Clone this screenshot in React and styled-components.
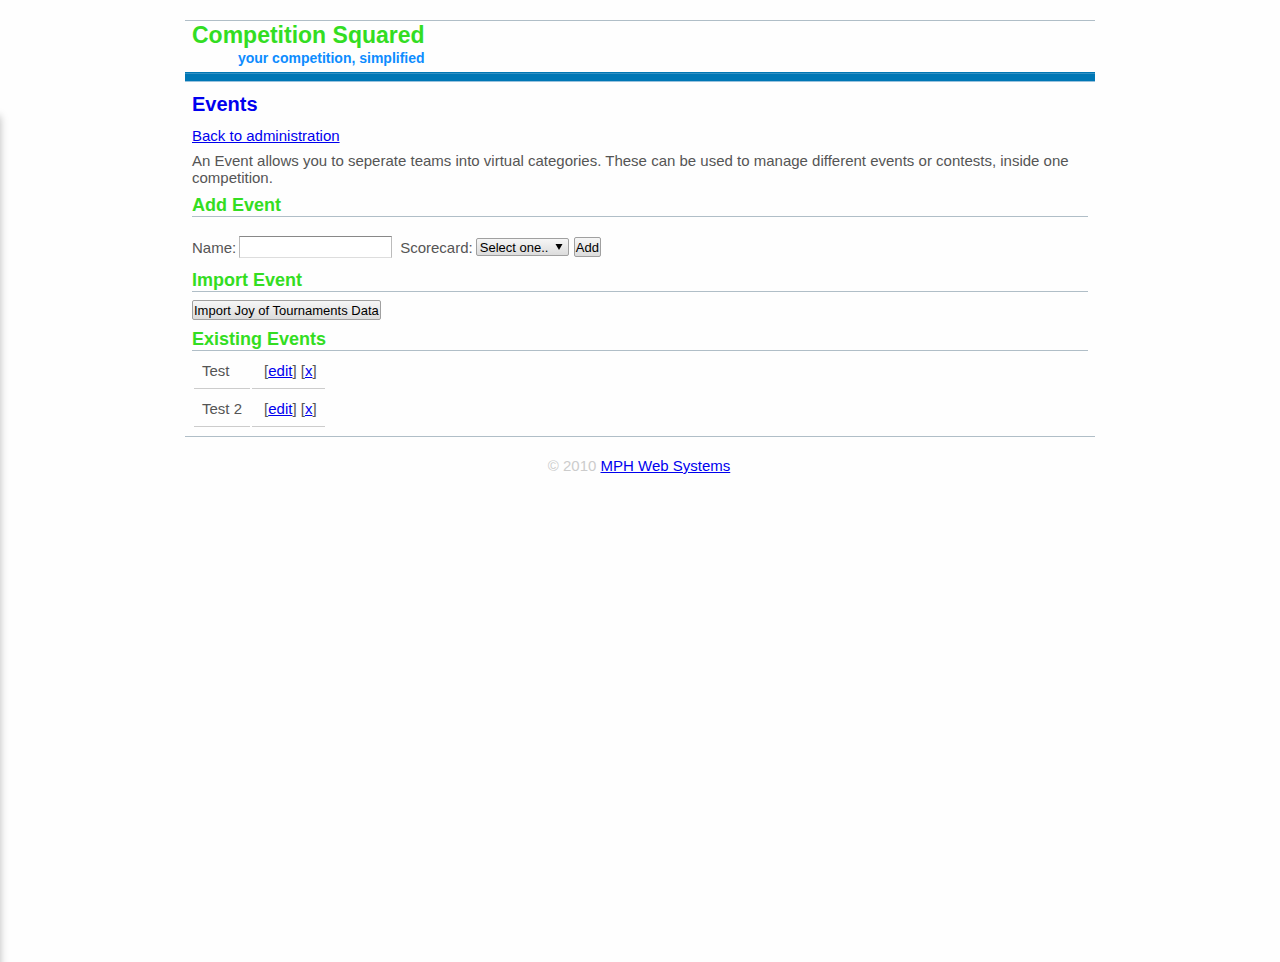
import React from "react";
import styled, { createGlobalStyle } from "styled-components";

const GlobalStyle = createGlobalStyle`
  * { box-sizing: border-box; }
  body {
    margin: 0;
    padding: 20px 0;
    background: #fefefe;
    color: #555;
    font: 15px/17px "Liberation Sans", Arial, sans-serif;
  }
  a { color: #00e; }
`;

const Drawer = styled.aside`
  position: fixed;
  top: 116px;
  bottom: -20px;
  left: -200px;
  width: 200px;
  background: #fff;
  box-shadow: 0 0 8px #bbb;
`;

const Page = styled.div`
  max-width: 910px;
  margin: 0 auto;
  border-top: 1px solid #b0bec7;
`;

const Header = styled.header`
  padding: 0 7px 5px;
`;

const Brand = styled.div`
  width: max-content;
  text-align: right;
  font-weight: bold;
`;

const Logo = styled.div`
  color: #3d2;
  font-size: 23px;
  line-height: 28px;
`;

const Tagline = styled.div`
  color: #0d8cff;
  font-size: 14px;
  line-height: 18px;
`;

const Bar = styled.div`
  height: 10px;
  background: #0077b5;
  border-top: 1px solid #0077b5;
  border-bottom: 1px solid #99c2dd;
  box-shadow: inset 0 1px #3390c3;
`;

const Content = styled.main`
  padding: 10px 7px 9px;
  border-bottom: 1px solid #b0bec7;
`;

const Title = styled.h1`
  margin: 0 0 11px;
  color: #00e;
  font-size: 20px;
  line-height: 24px;
`;

const Text = styled.p`
  margin: 0 0 8px;
`;

const Heading = styled.h2`
  margin: 0;
  border-bottom: 1px solid #b0bec7;
  color: #3d2;
  font-size: 18px;
  line-height: 22px;
`;

const Form = styled.form`
  display: flex;
  align-items: center;
  margin: 19px 0 11px;
`;

const Label = styled.label`
  margin-right: 3px;
`;

const Input = styled.input`
  width: 153px;
  height: 22px;
  margin-right: 8px;
  padding: 1px;
  border: 1px solid;
  border-color: #888 #bbb #ddd;
  background: #fff;
  font: inherit;
`;

const controlFace = `
  border: 1px solid #a0a0a0;
  border-radius: 2px;
  background: linear-gradient(#f6f6f6, #dcdcdc);
  color: #000;
  font: 13px/16px "Liberation Sans", Arial, sans-serif;
`;

const SelectBox = styled.span`
  position: relative;
  display: flex;
  margin-right: 5px;
`;

const Select = styled.select`
  ${controlFace}
  appearance: none;
  width: 93px;
  height: 18px;
  padding: 1px 3px 0;
`;

const Arrow = styled.svg`
  position: absolute;
  top: 6px;
  right: 6px;
  pointer-events: none;
`;

const Button = styled.button`
  ${controlFace}
  display: block;
  height: 20px;
  margin: ${(p) => (p.$spaced ? "8px 0" : "0")};
  padding: 2px 1px 0;
`;

const Table = styled.table`
  border-spacing: 2px 0;
`;

const Cell = styled.td`
  height: 38px;
  padding: 1px 8px 0 ${(p) => (p.$actions ? "12px" : "8px")};
  border-bottom: 1px solid #ccc;
`;

const Footer = styled.footer`
  padding-top: 20px;
  padding-right: 2px;
  color: #ccc;
  text-align: center;
`;

export default function App() {
  return (
    <>
      <GlobalStyle />
      <Drawer />
      <Page>
        <Header>
          <Brand>
            <Logo>Competition Squared</Logo>
            <Tagline>your competition, simplified</Tagline>
          </Brand>
        </Header>
        <Bar />
        <Content>
          <Title>Events</Title>
          <Text><a href="#admin">Back to administration</a></Text>
          <Text>
            An Event allows you to seperate teams into virtual categories. These can be used to
            manage different events or contests, inside one competition.
          </Text>
          <Heading>Add Event</Heading>
          <Form onSubmit={(e) => e.preventDefault()}>
            <Label htmlFor="name">Name:</Label>
            <Input id="name" type="text" />
            <Label htmlFor="scorecard">Scorecard:</Label>
            <SelectBox>
              <Select id="scorecard">
                <option>Select one..</option>
              </Select>
              <Arrow width="8" height="6" aria-hidden="true">
                <path d="M0.5 0h7L4 6z" fill="#000" />
              </Arrow>
            </SelectBox>
            <Button type="submit">Add</Button>
          </Form>
          <Heading>Import Event</Heading>
          <Button type="button" $spaced>Import Joy of Tournaments Data</Button>
          <Heading>Existing Events</Heading>
          <Table>
            <tbody>
              {["Test", "Test 2"].map((name) => (
                <tr key={name}>
                  <Cell>{name}</Cell>
                  <Cell $actions>
                    [<a href="#edit">edit</a>] [<a href="#delete">x</a>]
                  </Cell>
                </tr>
              ))}
            </tbody>
          </Table>
        </Content>
        <Footer>
          © 2010 <a href="#mph">MPH Web Systems</a>
        </Footer>
      </Page>
    </>
  );
}
